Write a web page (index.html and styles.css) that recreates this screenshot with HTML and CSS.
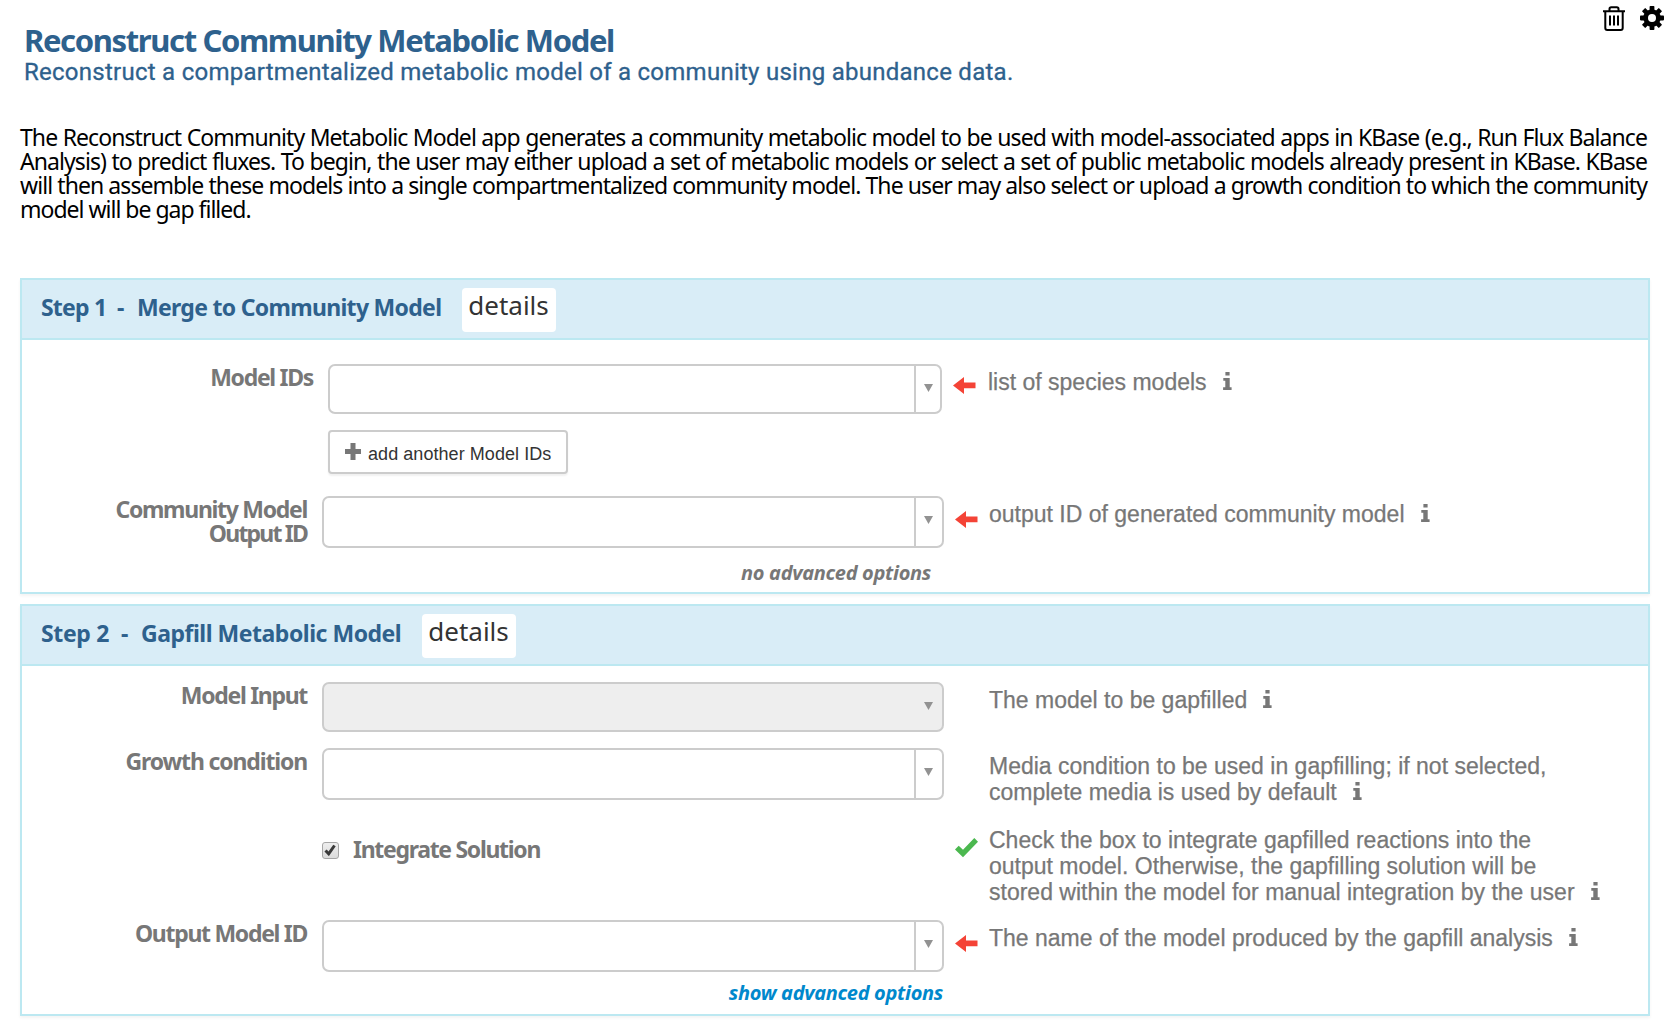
FILE: index.html
```html
<!DOCTYPE html>
<html lang="en">
<head>
<meta charset="utf-8">
<title>Reconstruct Community Metabolic Model</title>
<link rel="stylesheet" href="styles.css">
</head>
<body>
<svg class="defs" aria-hidden="true">
  <symbol id="info" viewBox="0 0 9 18"><path d="M2.4 0h4.2v3.5H2.4zM.3 6h6.4v9.3h1.9V18H.1v-2.7h2.2V8.7H.3z"/></symbol>
  <symbol id="arrow" viewBox="0 0 23 17"><path d="M0 8.500 11 0v5.600h11.500v5.600H11V17z"/></symbol>
  <symbol id="check" viewBox="0 0 23 20"><path d="M0 11.500 3.700 7.800 8 11.800 19.300 0 23 3.700 8 19.300z"/></symbol>
  <symbol id="caret" viewBox="0 0 9 8"><path d="M0 0h9L4.500 8z"/></symbol>
</svg>
<header class="app-header">
  <div class="heading">
    <h1>Reconstruct Community Metabolic Model</h1>
    <h2>Reconstruct a compartmentalized metabolic model of a community using abundance data.</h2>
  </div>
  <div class="tools">
    <svg class="trash" width="22" height="25" viewBox="0 0 22 25" fill="none" stroke="#000" stroke-width="2"><path d="M0 5.300h22M6.500 5V3q0-1.700 1.700-1.700h5.600q1.700 0 1.700 1.700v2M2.300 5v17q0 2 2 2h13.400q2 0 2-2V5M7 9.500v10M11 9.500v10M15 9.500v10"/></svg>
    <svg class="gear" width="24" height="24" viewBox="-12 -12 24 24"><g fill="#000"><rect id="tooth" x="-2.400" y="-12" width="4.800" height="24" rx=".8"/><use href="#tooth" transform="rotate(45)"/><use href="#tooth" transform="rotate(90)"/><use href="#tooth" transform="rotate(135)"/><circle r="8.700"/></g><circle r="4" fill="#fff"/></svg>
  </div>
</header>
<p class="about">
  <span>The Reconstruct Community Metabolic Model app generates a community metabolic model to be used with model-associated apps in KBase (e.g., Run Flux Balance</span>
  <span>Analysis) to predict fluxes. To begin, the user may either upload a set of metabolic models or select a set of public metabolic models already present in KBase. KBase</span>
  <span>will then assemble these models into a single compartmentalized community model. The user may also select or upload a growth condition to which the community</span>
  <span class="last">model will be gap filled.</span>
</p>

<section class="panel">
  <div class="panel-head">
    <h3><span class="step one">Step 1</span><span class="dash">-</span><span class="merge">Merge to Community Model</span></h3>
    <button class="details">details</button>
  </div>
  <div class="panel-body first">
    <div class="row nested">
      <label>Model IDs</label>
      <div class="select short"><span class="toggle"><svg><use href="#caret"/></svg></span></div>
      <div class="mark"><svg class="arrow"><use href="#arrow"/></svg></div>
      <p class="hint">list of species models<svg class="info"><use href="#info"/></svg></p>
    </div>
    <div class="row nested">
      <span></span>
      <button class="add"><svg width="16" height="17" viewBox="0 0 16 17"><path fill="#777" d="M5.500 0h5v6H16v5h-5.500v6h-5v-6H0V6h5.500z"/></svg>add another Model IDs</button>
    </div>
    <div class="row">
      <label>Community Model<br><span class="tight">Output ID</span></label>
      <div class="select"><span class="toggle"><svg><use href="#caret"/></svg></span></div>
      <div class="mark low"><svg class="arrow"><use href="#arrow"/></svg></div>
      <p class="hint">output ID of generated community model<svg class="info"><use href="#info"/></svg></p>
    </div>
    <p class="advanced none">no advanced options</p>
  </div>
</section>

<section class="panel">
  <div class="panel-head">
    <h3><span class="step">Step 2</span><span class="dash">-</span><span class="gapfill">Gapfill Metabolic Model</span></h3>
    <button class="details">details</button>
  </div>
  <div class="panel-body">
    <div class="row">
      <label>Model Input</label>
      <div class="select short disabled"><span class="toggle"><svg><use href="#caret"/></svg></span></div>
      <div class="mark"></div>
      <p class="hint">The model to be gapfilled<svg class="info"><use href="#info"/></svg></p>
    </div>
    <div class="row fixed">
      <label class="loose">Growth condition</label>
      <div class="select"><span class="toggle"><svg><use href="#caret"/></svg></span></div>
      <div class="mark"></div>
      <p class="hint">Media condition to be used in gapfilling; if not selected,<br>complete media is used by default<svg class="info"><use href="#info"/></svg></p>
    </div>
    <div class="row tall">
      <span></span>
      <div class="check-control"><span class="box"><svg width="12" height="12" viewBox="0 0 12 12"><path d="M1.500 6.500 4.700 9.800 10.500 1.500" fill="none" stroke="#3a3a3a" stroke-width="3"/></svg></span><label>Integrate Solution</label></div>
      <div class="mark done"><svg class="check"><use href="#check"/></svg></div>
      <p class="hint">Check the box to integrate gapfilled reactions into the<br>output model. Otherwise, the gapfilling solution will be<br>stored within the model for manual integration by the user<svg class="info"><use href="#info"/></svg></p>
    </div>
    <div class="row">
      <label>Output Model ID</label>
      <div class="select"><span class="toggle"><svg><use href="#caret"/></svg></span></div>
      <div class="mark low"><svg class="arrow"><use href="#arrow"/></svg></div>
      <p class="hint">The name of the model produced by the gapfill analysis<svg class="info"><use href="#info"/></svg></p>
    </div>
    <p class="advanced show">show advanced options</p>
  </div>
</section>
</body>
</html>
```
FILE: styles.css
```css
* { box-sizing: border-box; }
body { margin: 0; height: 1036px; overflow: hidden; background: #fff; font-family: "Noto Sans", sans-serif; }
h1, h2, h3, p { margin: 0; white-space: nowrap; }
button { font: inherit; margin: 0; }
.defs { display: none; }

.app-header { display: flex; justify-content: space-between; height: 125px; padding: 0 8px 0 24px; color: #2e618d; }
.heading { padding-top: 22px; }
h1 { font-size: 31px; line-height: 36px; font-weight: 700; letter-spacing: -1.37px; }
h2 { font: 400 24px/28px Roboto, sans-serif; letter-spacing: .26px; -webkit-text-stroke: .3px #2e618d; }
.tools { display: flex; gap: 15px; padding-top: 6px; }

.about { width: 1627px; margin-left: 20px; height: 153px; font-size: 23px; line-height: 24px; color: #000; }
.about span { display: block; letter-spacing: -.93px; text-align: justify; text-align-last: justify; }
.about .last { letter-spacing: -1px; text-align-last: left; }

.panel { width: 1630px; margin: 0 0 10px 20px; border: 2px solid #bce8f1; box-shadow: 0 2px 3px rgba(0,0,0,.05); }
.panel-head { display: flex; height: 60px; padding: 8px 0 0 19px; background: #d9edf7; border-bottom: 2px solid #bce8f1; }
h3 { display: flex; font-size: 23px; line-height: 39px; font-weight: 700; color: #2e618d; letter-spacing: -.6px; }
.step { width: 80px; letter-spacing: -.35px; }
.step.one { width: 76px; letter-spacing: -.8px; }
.dash { width: 20px; }
.merge { width: 325px; letter-spacing: -.7px; }
.gapfill { width: 281px; letter-spacing: -.48px; }
.details { width: 94px; height: 44px; padding: 0 1px 9px 0; border: 0; border-radius: 4px; background: #fff; color: #333; font-size: 26px; line-height: 35px; }

.panel-body { display: flex; flex-direction: column; gap: 16px; height: 348px; padding-top: 16px; }
.panel-body.first { height: 252px; padding-top: 24px; }
.row { display: grid; grid-template-columns: 300px 622px 45px 1fr; }
.row.nested { grid-template-columns: 306px 614px 46px 1fr; }
.row.fixed { height: 52px; }
.row > label { padding: 1px 15px 0 0; text-align: right; }
label { font-size: 23px; line-height: 24px; font-weight: 700; color: #777; letter-spacing: -1.3px; }
.tight { letter-spacing: -1.8px; }
.row > .loose { letter-spacing: -1.15px; }
.select { display: flex; justify-content: flex-end; height: 52px; border: 2px solid #ccc; border-radius: 7px; background: #fff; }
.select.short { height: 50px; }
.toggle { width: 28px; border-left: 2px solid #ccc; padding: 18px 0 0 8px; line-height: 0; }
.nested .toggle { width: 26px; }
.toggle svg { width: 9px; height: 8px; fill: #929292; }
.disabled { background: #eee; }
.disabled .toggle { border-color: transparent; }
.mark { padding: 13px 0 0 11px; line-height: 0; }
.mark.low { padding-top: 15px; }
.mark.done { padding-top: 22px; }
.arrow { width: 23px; height: 17px; fill: #f44336; }
.check { width: 23px; height: 20px; fill: #4bb84f; }
.hint { padding-top: 5px; font: 23px/26px "Liberation Sans", sans-serif; color: #777; -webkit-text-stroke: .25px #777; }
.info { width: 9px; height: 18px; margin-left: 16px; fill: #777; vertical-align: 0; stroke: none; }
.add { display: flex; align-items: center; gap: 7px; width: 240px; height: 44px; margin-bottom: 6px; padding: 4px 0 0 15px; border: 2px solid #ccc; border-radius: 4px; background: #fff; box-shadow: 0 2px 2px rgba(0,0,0,.06); color: #333; font: 18px/22px "Liberation Sans", sans-serif; letter-spacing: .06px; white-space: nowrap; }
.add svg { margin-top: -5px; }
.tall { height: 88px; }
.tall .hint { padding-top: 11px; }
.check-control { display: flex; padding-top: 20px; }
.check-control label { margin-top: 1px; }
.box { width: 17px; height: 17px; margin: 6px 14px 0 0; border: 1.500px solid #a6a6a6; border-radius: 3px; background: linear-gradient(#eee, #dcdcdc); line-height: 0; padding: 1px; }
.advanced { width: 922px; text-align: right; font-size: 20px; line-height: 26px; font-weight: 700; font-style: italic; letter-spacing: -.31px; }
.none { padding-right: 13px; margin-top: -4px; color: #777; }
.show { padding-right: 1px; margin-top: -8px; color: #0088cc; }
```
